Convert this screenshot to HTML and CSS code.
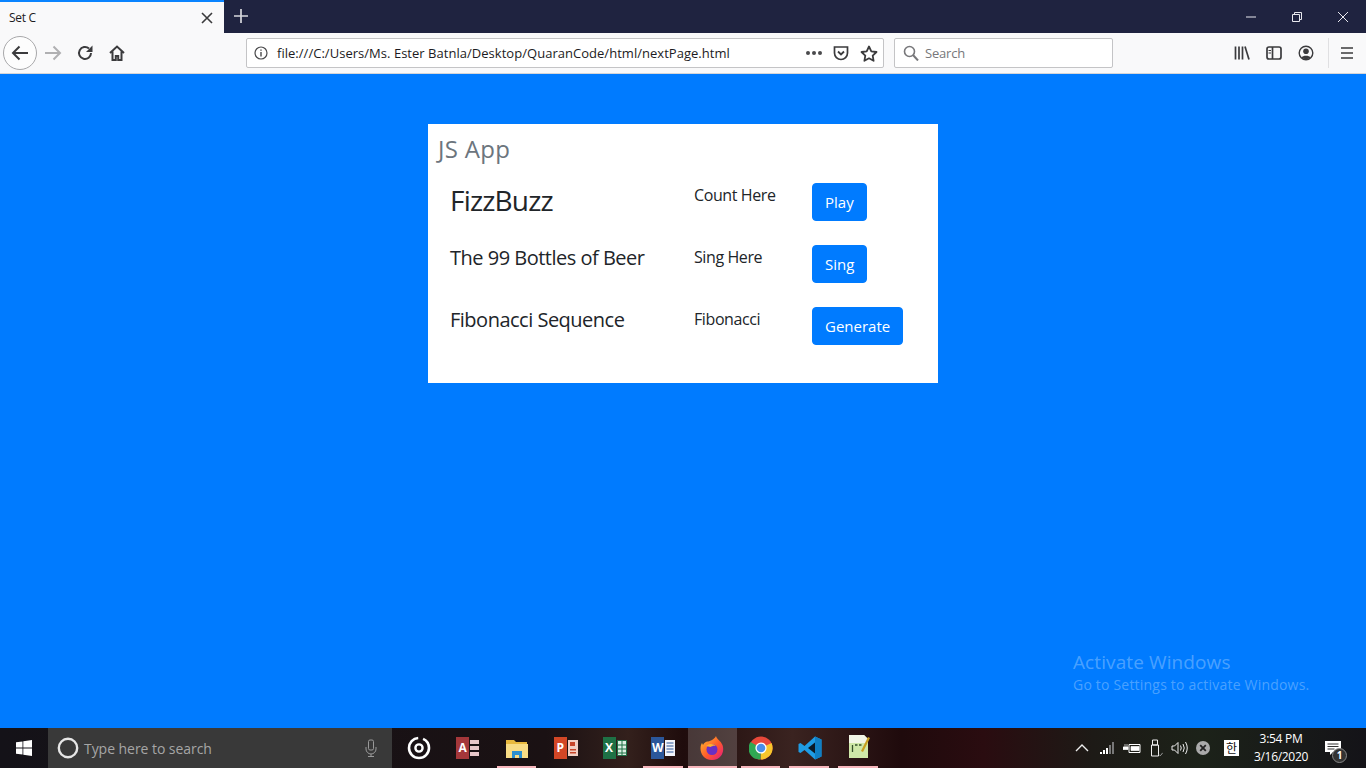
FILE: index.html
```html
<!DOCTYPE html>
<html lang="en">
<head>
    <meta charset="UTF-8">
    <meta name="viewport" content="width=device-width, initial-scale=1.0">
    <title>Set C</title>
    <link rel="stylesheet" href="styles.css">
</head>
<body>
    <!-- Browser tabs -->
    <div class="tabbar">
        <div class="tab">
            <span class="tab-title">Set C</span>
            <svg class="tab-close" width="12" height="12" viewBox="0 0 12 12"><path d="M1 1l10 10M11 1L1 11" stroke="#3a3a3c" stroke-width="1.6"/></svg>
        </div>
        <svg class="new-tab" width="14" height="14" viewBox="0 0 14 14"><path d="M7 0v14M0 7h14" stroke="#d6d7dc" stroke-width="1.7"/></svg>
        <div class="window-controls">
            <svg width="12" height="12" viewBox="0 0 12 12"><path d="M1 6h10" stroke="#e8e8ee" stroke-width="1"/></svg>
            <svg width="12" height="12" viewBox="0 0 12 12"><path d="M1.500 3.500h7v7h-7zM3.500 3.500v-2h7v7h-2" fill="none" stroke="#e8e8ee" stroke-width="1"/></svg>
            <svg width="12" height="12" viewBox="0 0 12 12"><path d="M1 1l10 10M11 1L1 11" stroke="#e8e8ee" stroke-width="1"/></svg>
        </div>
    </div>

    <!-- Browser toolbar -->
    <div class="toolbar">
        <div class="back-button">
            <svg width="18" height="16" viewBox="0 0 18 16"><path d="M17 8H2M8.500 1.500L2 8l6.500 6.500" fill="none" stroke="#3b3b3d" stroke-width="2"/></svg>
        </div>
        <div class="nav-icon">
            <svg width="18" height="16" viewBox="0 0 18 16"><path d="M1 8h15M9.500 1.500L16 8l-6.500 6.500" fill="none" stroke="#b0b0b2" stroke-width="2"/></svg>
        </div>
        <div class="nav-icon">
            <svg width="16" height="16" viewBox="0 0 16 16"><path d="M14 8a6 6 0 1 1-2-4.500" fill="none" stroke="#3b3b3d" stroke-width="2"/><path d="M15.500 0.500v6.500h-6.500z" fill="#3b3b3d"/></svg>
        </div>
        <div class="nav-icon">
            <svg width="16" height="16" viewBox="0 0 16 16"><path d="M1 8l7-6.500L15 8M3.500 6.500v8.500h3.300v-4h2.400v4h3.300V6.500" fill="none" stroke="#3b3b3d" stroke-width="2"/></svg>
        </div>

        <div class="urlbar">
            <svg class="info-icon" width="14" height="14" viewBox="0 0 14 14"><circle cx="7" cy="7" r="6" fill="none" stroke="#4a4a4c" stroke-width="1.2"/><path d="M7 6v4.500M7 3.500v1.300" stroke="#4a4a4c" stroke-width="1.4"/></svg>
            <span class="url">file:///C:/Users/Ms. Ester Batnla/Desktop/QuaranCode/html/nextPage.html</span>
            <span class="dots"><i></i><i></i><i></i></span>
            <svg width="16" height="16" viewBox="0 0 16 16"><path d="M1.500 2h13v6a6.500 6.500 0 0 1-13 0z" fill="none" stroke="#3b3b3d" stroke-width="1.7"/><path d="M5 6.500L8 9.500l3-3" fill="none" stroke="#3b3b3d" stroke-width="1.8"/></svg>
            <svg class="star" width="18" height="17" viewBox="0 0 18 17"><path d="M9 1.500l2.300 4.800 5.200.7-3.800 3.600.9 5.200L9 13.300l-4.600 2.500.9-5.200L1.500 7l5.200-.7z" fill="none" stroke="#3b3b3d" stroke-width="1.800" stroke-linejoin="round"/></svg>
        </div>

        <div class="searchbar">
            <svg width="16" height="16" viewBox="0 0 16 16"><circle cx="6.500" cy="6.500" r="5" fill="none" stroke="#77777a" stroke-width="1.600"/><path d="M10 10l5 5.500" stroke="#77777a" stroke-width="2"/></svg>
            <span>Search</span>
        </div>

        <div class="tool-icons">
            <svg width="16" height="16" viewBox="0 0 16 16"><path d="M1.500 1.500v13M5 1.500v13M8.500 1.500v13" stroke="#3b3b3d" stroke-width="1.700"/><path d="M11 1.500l4 13" stroke="#3b3b3d" stroke-width="1.700"/></svg>
            <svg width="16" height="14" viewBox="0 0 16 14"><rect x="1" y="1" width="14" height="12" rx="2" fill="none" stroke="#3b3b3d" stroke-width="1.700"/><path d="M6.500 1v12" stroke="#3b3b3d" stroke-width="1.700"/><path d="M2.500 4.500h2.500M2.500 7h2.500" stroke="#3b3b3d" stroke-width="1.200"/></svg>
            <svg width="16" height="16" viewBox="0 0 16 16"><circle cx="8" cy="8" r="6.800" fill="none" stroke="#3b3b3d" stroke-width="1.400"/><circle cx="8" cy="6.300" r="2.800" fill="#3b3b3d"/><path d="M3.500 12.500c1-2.500 8-2.500 9 0-2 2.200-7 2.200-9 0z" fill="#3b3b3d"/></svg>
            <span class="tool-sep"></span>
            <svg width="14" height="14" viewBox="0 0 14 14"><path d="M1 2h12M1 7h12M1 12h12" stroke="#3b3b3d" stroke-width="1.700"/></svg>
        </div>
    </div>

    <!-- Page content -->
    <div class="page">
        <div class="card">
            <h4 class="card-title">JS App</h4>
            <div class="app-row">
                <h3 class="app-name app-name-big">FizzBuzz</h3>
                <p class="app-label">Count Here</p>
                <div><button class="btn">Play</button></div>
            </div>
            <div class="app-row">
                <h5 class="app-name">The 99 Bottles of Beer</h5>
                <p class="app-label">Sing Here</p>
                <div><button class="btn">Sing</button></div>
            </div>
            <div class="app-row">
                <h5 class="app-name">Fibonacci Sequence</h5>
                <p class="app-label">Fibonacci</p>
                <div><button class="btn">Generate</button></div>
            </div>
        </div>

        <div class="watermark">
            <div class="watermark-title">Activate Windows</div>
            <div class="watermark-text">Go to Settings to activate Windows.</div>
        </div>
    </div>

    <!-- Windows taskbar -->
    <div class="taskbar">
        <div class="start">
            <svg width="16" height="16" viewBox="0 0 16 16"><path d="M0 2.300l6.500-.9v6.200H0zM7.300 1.300L16 0v7.600H7.300zM0 8.400h6.500v6.200L0 13.700zM7.300 8.400H16V16l-8.700-1.300z" fill="#fff"/></svg>
        </div>
        <div class="task-search">
            <svg width="22" height="22" viewBox="0 0 22 22"><circle cx="11" cy="11" r="9.200" fill="none" stroke="#e6e6e6" stroke-width="2.400"/></svg>
            <span class="task-search-text">Type here to search</span>
            <svg class="mic" width="12" height="18" viewBox="0 0 12 18"><rect x="3.500" y="1" width="5" height="10" rx="1.500" fill="none" stroke="#9a9a9a"/><path d="M1 8v2a5 5 0 0 0 10 0V8M6 15v2M3 17.500h6" fill="none" stroke="#9a9a9a"/></svg>
        </div>
        <div class="task-icons">
            <div class="task-item">
                <svg width="24" height="24" viewBox="0 0 24 24"><circle cx="12" cy="12" r="10" fill="none" stroke="#fff" stroke-width="2.600" stroke-dasharray="46 5"/><circle cx="12" cy="12" r="3.600" fill="none" stroke="#fff" stroke-width="2.400"/></svg>
            </div>
            <div class="task-item">
                <div class="office-icon office-access"><span>A</span><svg width="10" height="18" viewBox="0 0 10 18"><path d="M0 1h9v4H0zM0 7h9v4H0zM0 13h9v4H0z" fill="#e7c6c9"/></svg></div>
            </div>
            <div class="task-item open">
                <svg width="24" height="22" viewBox="0 0 24 22"><path d="M1 3h8l2 2h11v4H1z" fill="#e8b93e"/><path d="M1 7h22v14H1z" fill="#f8dc85"/><path d="M7 14h10v7h-3v-3h-4v3H7z" fill="#2a8fd0"/></svg>
            </div>
            <div class="task-item">
                <div class="office-icon office-ppt"><span>P</span><svg width="10" height="18" viewBox="0 0 10 18"><path d="M0 1h10v16H0z" fill="#f2d0c4"/><path d="M2 3h5v4H2zM2 10h6v1.500H2zM2 13h6v1.500H2z" fill="#c8462a"/></svg></div>
            </div>
            <div class="task-item">
                <div class="office-icon office-excel"><span>X</span><svg width="10" height="18" viewBox="0 0 10 18"><path d="M.5 1.500h9v15h-9zM.5 6h9M.5 10h9M.5 14h9M5 1.500v15" fill="#dcefe3" stroke="#1e7145"/></svg></div>
            </div>
            <div class="task-item open">
                <div class="office-icon office-word"><span>W</span><svg width="10" height="18" viewBox="0 0 10 18"><path d="M0 1h10v16H0z" fill="#f2f4fa"/><path d="M1.500 4h7M1.500 7h7M1.500 10h7M1.500 13h7" stroke="#2b579a"/></svg></div>
            </div>
            <div class="task-item active">
                <svg width="24" height="24" viewBox="0 0 24 24"><defs><linearGradient id="fx" x1="0" y1="0" x2="1" y2="1"><stop offset="0" stop-color="#ffc12e"/><stop offset=".55" stop-color="#ff5a2a"/><stop offset="1" stop-color="#e31587"/></linearGradient></defs><path d="M16 0c.5 3 4.500 4.500 6.500 9 2 5.500 0 15-10.500 15C4 24 .5 18 .500 12.500c0-2.500.7-4.500 1.500-5.500l1 2c1-2 3-3.500 4.500-3.500C9 5.500 14 4 16 0z" fill="url(#fx)"/><circle cx="12" cy="13.500" r="5.500" fill="#6a2fc4"/><path d="M6 10c3-3 8-2.500 10 0-3-.5-4 .5-5.500 1z" fill="#ffb02e"/></svg>
            </div>
            <div class="task-item open">
                <svg width="24" height="24" viewBox="0 0 24 24"><circle cx="12" cy="12" r="11.500" fill="#e8483a"/><path d="M12 12L22.500 7A11.500 11.500 0 0 1 12 23.500z" fill="#f8c52c"/><path d="M12 12l-5.500 11A11.500 11.500 0 0 1 1.500 6z" fill="#2fa853"/><path d="M12 12l-.5 11.500a11.500 11.500 0 0 1-5-1z" fill="#2fa853"/><circle cx="12" cy="12" r="5.600" fill="#fff"/><circle cx="12" cy="12" r="4.300" fill="#4a8ee8"/></svg>
            </div>
            <div class="task-item open">
                <svg width="24" height="24" viewBox="0 0 24 24"><path d="M17 .500L23.500 3.500v17L17 23.500 6.500 14 2.500 17 .500 16v-8l2-1 4 3z" fill="#1f9ce4"/><path d="M17 6.500L10 12l7 5.500z" fill="#0b1a26"/><path d="M17 .5l6.500 3v17l-6.500 3z" fill="#0f7fc4"/></svg>
            </div>
            <div class="task-item open">
                <svg class="notes-icon" width="22" height="25" viewBox="0 0 22 25"><path d="M1 1h15l4 4v19H1z" fill="#cfe8a8"/><path d="M1 1h15l4 4v4H1z" fill="#f2f6e6"/><path d="M4.500 18v-7M7 11h2.500M11 11h2.500" stroke="#35512a" stroke-width="1.300" fill="none"/><path d="M13 17L20 3l2 1-7 14z" fill="#c8a020"/></svg>
            </div>
        </div>
        <div class="tray">
            <svg class="tray-chevron" width="14" height="8" viewBox="0 0 14 8"><path d="M1 7l6-6 6 6" fill="none" stroke="#eee" stroke-width="1.400"/></svg>
            <svg width="16" height="12" viewBox="0 0 16 12"><path d="M1 10h2v2H1zM4 8h2v4H4z" fill="#fff"/><path d="M7 6h2v6H7z" fill="#fff"/><path d="M10 3h2v9h-2zM13 0h2v12h-2z" fill="#777"/></svg>
            <svg width="18" height="12" viewBox="0 0 18 12"><path d="M6 2.500h11v8H6z" fill="none" stroke="#fff"/><path d="M8 4.500h8v4H8zM0 5h5v2.500H0zM2 2v3M4 2v3" fill="#fff" stroke="#fff" stroke-width=".7"/></svg>
            <svg width="14" height="18" viewBox="0 0 14 18"><path d="M2.500 6h7v11h-7zM3.500 1h5v5h-5z" fill="none" stroke="#eee"/><path d="M10 15.500l1.300 1.300 2.400-3" fill="none" stroke="#999"/></svg>
            <svg width="17" height="14" viewBox="0 0 17 14"><path d="M1 5h2.500L7 1.500v11L3.500 9H1zM9.500 4.500q1.500 2.500 0 5M12 3q2.500 4 0 8M14.500 1q3.500 6 0 12" fill="none" stroke="#eee"/></svg>
            <svg width="14" height="14" viewBox="0 0 14 14"><circle cx="7" cy="7" r="7" fill="#aaa"/><path d="M4.200 4.200l5.600 5.600M9.800 4.200l-5.600 5.600" stroke="#222" stroke-width="1.800"/></svg>
            <span class="ime">한</span>
            <div class="clock"><span>3:54 PM</span><span>3/16/2020</span></div>
            <div class="notify">
                <svg width="16" height="14" viewBox="0 0 16 14"><path d="M0 0h16v11H8l-3 3v-3H0z" fill="#fff"/><path d="M2.500 3h11M2.500 5.500h11M2.500 8h7" stroke="#333"/></svg>
                <span class="notify-count">1</span>
            </div>
        </div>
    </div>
</body>
</html>
```

FILE: styles.css
```css
* {
    margin: 0;
    padding: 0;
    box-sizing: border-box;
}

body {
    font-family: 'Open Sans', 'Noto Sans', sans-serif;
    height: 100vh;
    overflow: hidden;
    display: flex;
    flex-direction: column;
    background: #007bff;
}

/* Tabs */
.tabbar {
    height: 33px;
    background: #1f2340;
    display: flex;
    align-items: center;
}

.tab {
    width: 224px;
    height: 33px;
    background: #f9f9fa;
    border-top: 2px solid #0a84ff;
    display: flex;
    align-items: center;
    justify-content: space-between;
    padding: 0 11px 0 9px;
}

.tab-title {
    font-size: 12px;
    color: #1c1b22;
    letter-spacing: -0.3px;
}

.new-tab {
    margin: 0 0 2px 10px;
}

.window-controls {
    margin-left: auto;
    display: flex;
    gap: 34px;
    padding-right: 17px;
}

/* Toolbar */
.toolbar {
    height: 41px;
    background: #f9f9fa;
    border-bottom: 1px solid #d5d5d8;
    display: flex;
    align-items: center;
    padding-left: 3px;
}

.toolbar > * {
    flex: none;
}

.back-button {
    width: 34px;
    height: 34px;
    border: 1px solid #a8a8aa;
    border-radius: 50%;
    background: #fdfdfd;
    display: flex;
    align-items: center;
    justify-content: center;
}

.nav-icon {
    width: 32px;
    height: 32px;
    display: flex;
    align-items: center;
    justify-content: center;
}

.urlbar {
    width: 638px;
    height: 30px;
    margin-left: 113px;
    background: #fff;
    border: 1px solid #c4c4c6;
    border-radius: 2px;
    display: flex;
    align-items: center;
    padding: 0 5px 0 7px;
}

.info-icon {
    flex: none;
}

.url {
    margin-left: 9px;
    font-size: 13px;
    color: #1c1b22;
    flex: 1;
    white-space: nowrap;
    letter-spacing: 0.03px;
}

.dots {
    display: flex;
    gap: 2px;
    margin-right: 11px;
    margin-left: -2px;
}

.dots i {
    width: 4px;
    height: 4px;
    border-radius: 50%;
    background: #4a4a4c;
}

.star {
    margin-left: 11px;
}

.searchbar {
    width: 219px;
    height: 30px;
    margin-left: 10px;
    background: #fff;
    border: 1px solid #c4c4c6;
    border-radius: 2px;
    display: flex;
    align-items: center;
    gap: 6px;
    padding-left: 8px;
    font-size: 13px;
    color: #77777a;
    letter-spacing: -0.2px;
}

.tool-icons {
    display: flex;
    align-items: center;
    margin-left: 121px;
}

.tool-icons svg {
    margin-right: 16px;
}

.tool-sep {
    width: 1px;
    height: 30px;
    background: #e0e0e2;
    margin-right: 11px;
    margin-left: -2px;
}

/* Page */
.page {
    flex: 1;
    position: relative;
    padding-top: 50px;
    background: #007bff;
}

.card {
    width: 510px;
    height: 259px;
    margin: 0 auto;
    background: #fff;
    padding: 9px;
}

.card-title {
    font-size: 24px;
    font-weight: 400;
    line-height: 32px;
    color: #6c757d;
    letter-spacing: 0.3px;
    margin-left: 1px;
    margin-bottom: 18px;
}

.app-row {
    display: grid;
    grid-template-columns: 244px 118px auto;
    height: 62px;
    padding-left: 13px;
    color: #212529;
}

.app-name {
    font-size: 20px;
    font-weight: 400;
    line-height: 24px;
    margin-top: 1px;
    letter-spacing: -0.5px;
    white-space: nowrap;
}

.app-name-big {
    font-size: 28px;
    line-height: 34px;
    margin-top: 0;
    letter-spacing: -0.8px;
}

.app-label {
    font-size: 16px;
    line-height: 24px;
    letter-spacing: -0.4px;
}

.btn {
    font-family: inherit;
    font-size: 15px;
    line-height: 24px;
    padding: 6px 12px;
    color: #fff;
    background: #007bff;
    border: 1px solid #007bff;
    border-radius: 4px;
}

.watermark {
    position: absolute;
    left: 1073px;
    top: 575px;
    color: rgba(255, 255, 255, 0.3);
    white-space: nowrap;
}

.watermark-title {
    font-size: 19px;
    line-height: 26px;
    letter-spacing: 0.1px;
}

.watermark-text {
    font-size: 14px;
    line-height: 20px;
    letter-spacing: 0.2px;
}

/* Taskbar */
.taskbar {
    height: 40px;
    background: linear-gradient(90deg, #141218 0%, #1a1113 40%, #33201c 46%, #1f0c0c 50%, #3a2320 58%, #1f0a0c 66%, #2a0c10 72%, #1d1a16 80%, #1c2219 88%, #141318 100%);
    display: flex;
    align-items: stretch;
    color: #fff;
}

.start {
    width: 48px;
    display: flex;
    align-items: center;
    justify-content: center;
}

.task-search {
    width: 344px;
    background: #393939;
    display: flex;
    align-items: center;
    padding-left: 9px;
    padding-right: 15px;
}

.task-search-text {
    flex: 1;
    margin-left: 5px;
    font-size: 14px;
    color: #a6a6a6;
    letter-spacing: -0.05px;
}

.task-icons {
    display: flex;
    padding-left: 3px;
}

.task-item {
    width: 48.8px;
    position: relative;
    display: flex;
    align-items: center;
    justify-content: center;
}

.task-item.open::after {
    content: "";
    position: absolute;
    left: 4px;
    right: 5px;
    bottom: 0;
    height: 2px;
    background: #f7b6bc;
}

.task-item.active {
    background: rgba(255, 255, 255, 0.18);
}

.task-item.active::after {
    content: "";
    position: absolute;
    left: 0;
    right: 0;
    bottom: 0;
    height: 2px;
    background: #f7b6bc;
}

.notes-icon {
    margin-bottom: 3px;
}

.office-icon {
    display: flex;
    align-items: center;
    gap: 1px;
}

.office-icon span {
    width: 13px;
    height: 22px;
    font-size: 12px;
    font-weight: 700;
    line-height: 22px;
    text-align: center;
    color: #fff;
}

.office-access span {
    background: #a4373a;
}

.office-ppt span {
    background: #d24726;
}

.office-excel span {
    background: #1e7145;
}

.office-word span {
    background: #2b579a;
}

.tray {
    margin-left: auto;
    display: flex;
    align-items: center;
    padding-right: 21px;
    gap: 8px;
}

.tray-chevron {
    margin-right: 2px;
}

.ime {
    width: 15px;
    height: 16px;
    margin-left: 6px;
    background: #fff;
    color: #111;
    font-family: 'Noto Sans CJK KR', sans-serif;
    font-size: 12px;
    line-height: 16px;
    text-align: center;
}

.clock {
    width: 72px;
    margin-left: -2px;
    display: flex;
    flex-direction: column;
    align-items: center;
    font-size: 12px;
    line-height: 18px;
    letter-spacing: -0.3px;
}

.notify {
    position: relative;
    width: 20px;
}

.notify svg {
    display: block;
}

.notify-count {
    position: absolute;
    left: 7px;
    top: 7px;
    width: 15px;
    height: 15px;
    border-radius: 50%;
    background: #333;
    border: 1px solid #888;
    font-size: 10px;
    font-weight: 700;
    line-height: 13px;
    text-align: center;
}
```
